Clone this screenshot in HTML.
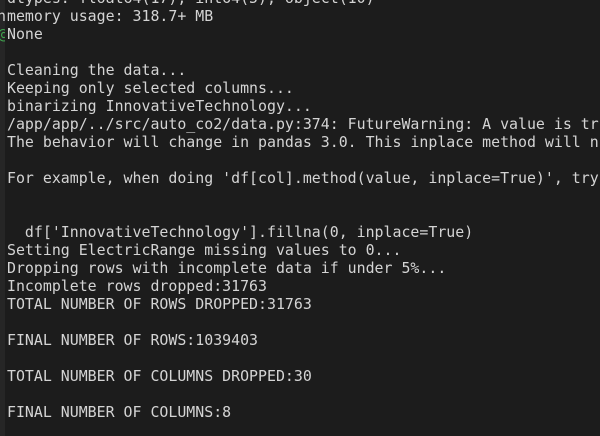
<!DOCTYPE html>
<html><head><meta charset="utf-8"><style>
html,body{margin:0;padding:0;width:600px;height:436px;overflow:hidden;background:#1c1c1c;}
.strip{position:absolute;left:0;top:0;width:5px;height:436px;background:#262626;overflow:hidden;}
.strip span{position:absolute;left:-3px;font:14.9px/18px "DejaVu Sans Mono",monospace;color:#cfcfcf;}
pre{position:absolute;left:7px;top:-11px;width:593px;overflow:hidden;margin:0;font:14.9px/18px "DejaVu Sans Mono","Liberation Mono",monospace;color:#d4d4d4;white-space:pre;}
</style></head><body>
<div class="strip"><span style="top:7px">n</span><span style="top:25px;color:#3fa34d;left:-2px">@</span></div>
<pre>dtypes: float64(17), int64(5), object(10)
memory usage: 318.7+ MB
None

Cleaning the data...
Keeping only selected columns...
binarizing InnovativeTechnology...
/app/app/../src/auto_co2/data.py:374: FutureWarning: A value is tr
The behavior will change in pandas 3.0. This inplace method will n

For example, when doing 'df[col].method(value, inplace=True)', try


  df['InnovativeTechnology'].fillna(0, inplace=True)
Setting ElectricRange missing values to 0...
Dropping rows with incomplete data if under 5%...
Incomplete rows dropped:31763
TOTAL NUMBER OF ROWS DROPPED:31763

FINAL NUMBER OF ROWS:1039403

TOTAL NUMBER OF COLUMNS DROPPED:30

FINAL NUMBER OF COLUMNS:8</pre>
</body></html>
